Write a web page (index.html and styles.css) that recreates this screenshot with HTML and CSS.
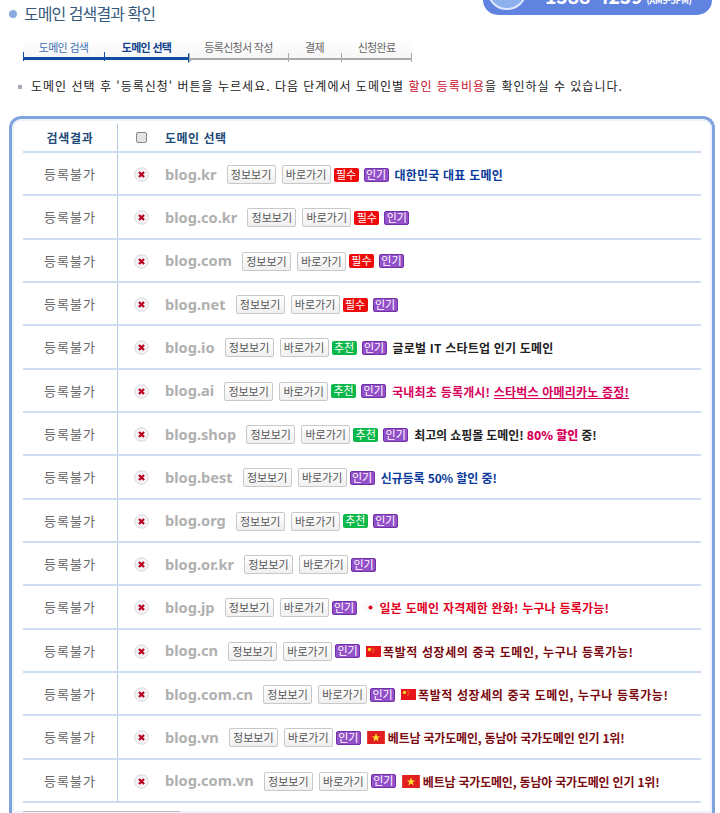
FILE: index.html
```html
<!DOCTYPE html>
<html lang="ko">
<head>
    <meta charset="UTF-8">
    <meta name="viewport" content="width=device-width, initial-scale=1.0">
    <title>도메인 검색결과 확인</title>
    <link rel="stylesheet" href="styles.css">
</head>
<body>

    <svg class="defs" width="0" height="0">
        <symbol id="no" viewBox="0 0 16 16">
            <circle cx="8" cy="8" r="7.2" fill="#f4f4f6" stroke="#d5d5da"/>
            <path d="M5.3 5.3 10.7 10.7M10.7 5.3 5.3 10.7" stroke="#b80020" stroke-width="2.4"/>
        </symbol>
        <symbol id="jp" viewBox="0 0 15 11">
            <rect width="15" height="11" fill="#fafafa"/>
            <circle cx="7.5" cy="5.5" r="2" fill="#e00020"/>
        </symbol>
        <symbol id="cn" viewBox="0 0 15 11">
            <rect width="15" height="11" fill="#e8141c"/>
            <circle cx="3.5" cy="3.5" r="1.8" fill="#f5d020"/>
            <circle cx="7" cy="2" r=".6" fill="#f5d020"/>
            <circle cx="8" cy="4" r=".6" fill="#f5d020"/>
            <circle cx="7" cy="6" r=".6" fill="#f5d020"/>
        </symbol>
        <symbol id="vn" viewBox="0 0 15 11">
            <rect width="15" height="11" fill="#e02020"/>
            <path d="M7.5 2 8.5 4.6H11L9 6.2 9.7 8.8 7.5 7.2 5.3 8.8 6 6.2 4 4.6H6.5Z" fill="#ffe030"/>
        </symbol>
    </svg>

    <header class="top">
        <h1 class="title">도메인 검색결과 확인</h1>
        <div class="phone">
            <span class="phone-icon"></span>
            <strong>1588-4259</strong>
            <span class="phone-note">(AM9-5PM)</span>
        </div>
    </header>

    <ol class="steps">
        <li class="step done">도메인 검색</li>
        <li class="step current">도메인 선택</li>
        <li class="step">등록신청서 작성</li>
        <li class="step short">결제</li>
        <li class="step last">신청완료</li>
    </ol>

    <p class="notice">도메인 선택 후 '등록신청' 버튼을 누르세요. 다음 단계에서 도메인별 <em>할인 등록비용</em>을 확인하실 수 있습니다.</p>

    <section class="panel">
        <div class="row head">
            <div class="col-result">검색결과</div>
            <div class="col-domain">
                <input type="checkbox" class="check">
                <span>도메인 선택</span>
            </div>
        </div>

        <div class="row">
            <div class="col-result">등록불가</div>
            <div class="col-domain">
                <svg class="no"><use href="#no"/></svg>
                <span class="name">blog.kr</span>
                <button class="btn">정보보기</button><button class="btn">바로가기</button>
                <span class="tag must">필수</span><span class="tag hot">인기</span>
                <span class="msg wide navy">대한민국 대표 도메인</span>
            </div>
        </div>
        <div class="row">
            <div class="col-result">등록불가</div>
            <div class="col-domain">
                <svg class="no"><use href="#no"/></svg>
                <span class="name">blog.co.kr</span>
                <button class="btn">정보보기</button><button class="btn">바로가기</button>
                <span class="tag must">필수</span><span class="tag hot">인기</span>
            </div>
        </div>
        <div class="row">
            <div class="col-result">등록불가</div>
            <div class="col-domain">
                <svg class="no"><use href="#no"/></svg>
                <span class="name">blog.com</span>
                <button class="btn">정보보기</button><button class="btn">바로가기</button>
                <span class="tag must">필수</span><span class="tag hot">인기</span>
            </div>
        </div>
        <div class="row">
            <div class="col-result">등록불가</div>
            <div class="col-domain">
                <svg class="no"><use href="#no"/></svg>
                <span class="name">blog.net</span>
                <button class="btn">정보보기</button><button class="btn">바로가기</button>
                <span class="tag must">필수</span><span class="tag hot">인기</span>
            </div>
        </div>
        <div class="row">
            <div class="col-result">등록불가</div>
            <div class="col-domain">
                <svg class="no"><use href="#no"/></svg>
                <span class="name">blog.io</span>
                <button class="btn">정보보기</button><button class="btn">바로가기</button>
                <span class="tag good">추천</span><span class="tag hot">인기</span>
                <span class="msg wide">글로벌 IT 스타트업 인기 도메인</span>
            </div>
        </div>
        <div class="row">
            <div class="col-result">등록불가</div>
            <div class="col-domain">
                <svg class="no"><use href="#no"/></svg>
                <span class="name">blog.ai</span>
                <button class="btn">정보보기</button><button class="btn">바로가기</button>
                <span class="tag good">추천</span><span class="tag hot">인기</span>
                <span class="msg wide pink">국내최초 등록개시! <u>스타벅스 아메리카노 증정!</u></span>
            </div>
        </div>
        <div class="row">
            <div class="col-result">등록불가</div>
            <div class="col-domain">
                <svg class="no"><use href="#no"/></svg>
                <span class="name">blog.shop</span>
                <button class="btn">정보보기</button><button class="btn">바로가기</button>
                <span class="tag good">추천</span><span class="tag hot">인기</span>
                <span class="msg">최고의 쇼핑몰 도메인! <b class="pink">80% 할인</b> 중!</span>
            </div>
        </div>
        <div class="row">
            <div class="col-result">등록불가</div>
            <div class="col-domain">
                <svg class="no"><use href="#no"/></svg>
                <span class="name">blog.best</span>
                <button class="btn">정보보기</button><button class="btn">바로가기</button>
                <span class="tag hot">인기</span>
                <span class="msg navy">신규등록 50% 할인 중!</span>
            </div>
        </div>
        <div class="row">
            <div class="col-result">등록불가</div>
            <div class="col-domain">
                <svg class="no"><use href="#no"/></svg>
                <span class="name">blog.org</span>
                <button class="btn">정보보기</button><button class="btn">바로가기</button>
                <span class="tag good">추천</span><span class="tag hot">인기</span>
            </div>
        </div>
        <div class="row">
            <div class="col-result">등록불가</div>
            <div class="col-domain">
                <svg class="no"><use href="#no"/></svg>
                <span class="name">blog.or.kr</span>
                <button class="btn">정보보기</button><button class="btn">바로가기</button>
                <span class="tag hot">인기</span>
            </div>
        </div>
        <div class="row">
            <div class="col-result">등록불가</div>
            <div class="col-domain">
                <svg class="no"><use href="#no"/></svg>
                <span class="name">blog.jp</span>
                <button class="btn">정보보기</button><button class="btn">바로가기</button>
                <span class="tag hot">인기</span>
                <svg class="flag"><use href="#jp"/></svg>
                <span class="msg wide red">일본 도메인 자격제한 완화! 누구나 등록가능!</span>
            </div>
        </div>
        <div class="row">
            <div class="col-result">등록불가</div>
            <div class="col-domain">
                <svg class="no"><use href="#no"/></svg>
                <span class="name">blog.cn</span>
                <button class="btn">정보보기</button><button class="btn">바로가기</button>
                <span class="tag hot">인기</span>
                <svg class="flag"><use href="#cn"/></svg>
                <span class="msg wider maroon">폭발적 성장세의 중국 도메인, 누구나 등록가능!</span>
            </div>
        </div>
        <div class="row">
            <div class="col-result">등록불가</div>
            <div class="col-domain">
                <svg class="no"><use href="#no"/></svg>
                <span class="name">blog.com.cn</span>
                <button class="btn">정보보기</button><button class="btn">바로가기</button>
                <span class="tag hot">인기</span>
                <svg class="flag"><use href="#cn"/></svg>
                <span class="msg wider maroon">폭발적 성장세의 중국 도메인, 누구나 등록가능!</span>
            </div>
        </div>
        <div class="row">
            <div class="col-result">등록불가</div>
            <div class="col-domain">
                <svg class="no"><use href="#no"/></svg>
                <span class="name">blog.vn</span>
                <button class="btn">정보보기</button><button class="btn">바로가기</button>
                <span class="tag hot">인기</span>
                <svg class="flag big"><use href="#vn"/></svg>
                <span class="msg tight maroon">베트남 국가도메인, 동남아 국가도메인 인기 1위!</span>
            </div>
        </div>
        <div class="row">
            <div class="col-result">등록불가</div>
            <div class="col-domain">
                <svg class="no"><use href="#no"/></svg>
                <span class="name">blog.com.vn</span>
                <button class="btn">정보보기</button><button class="btn">바로가기</button>
                <span class="tag hot">인기</span>
                <svg class="flag big"><use href="#vn"/></svg>
                <span class="msg tight maroon">베트남 국가도메인, 동남아 국가도메인 인기 1위!</span>
            </div>
        </div>

        <div class="more"></div>
    </section>

</body>
</html>
```

FILE: styles.css
```css
html, body {
    height: 813px;
    overflow: hidden;
}
body {
    margin: 0;
    background-color: #fff;
    font-family: "Noto Sans CJK KR", "Liberation Sans", sans-serif;
    font-size: 12px;
    color: #222;
}
.defs {
    display: block;
    height: 0;
}

/* top */
.top {
    display: flex;
    justify-content: space-between;
    align-items: flex-start;
    padding: 0 8px 0 9px;
    height: 38px;
}
.title {
    margin: 1px 0 0;
    font-size: 16px;
    font-weight: 400;
    line-height: 24px;
    letter-spacing: -.95px;
    color: #35597c;
}
.title::before {
    content: "";
    display: inline-block;
    width: 8px;
    height: 8px;
    margin-right: 7px;
    border-radius: 50%;
    background-color: #8aa9dc;
    vertical-align: 2px;
}
.phone {
    display: flex;
    align-items: flex-end;
    gap: 4px;
    box-sizing: border-box;
    width: 229px;
    height: 15px;
    padding: 0 0 10px 4px;
    border-radius: 0 0 22px 22px;
    background-color: #5f83df;
    color: #fff;
    line-height: 1;
}
.phone-icon {
    flex: none;
    width: 40px;
    height: 40px;
    margin-bottom: -5px;
    margin-right: 14px;
    border: 2px solid #dfe8fb;
    box-sizing: border-box;
    border-radius: 50%;
    background-color: #8fb0ee;
}
.phone strong {
    font-size: 19.5px;
    letter-spacing: -.2px;
}
.phone-note {
    font-size: 9px;
    font-weight: 700;
    letter-spacing: -.3px;
}

/* steps */
.steps {
    display: flex;
    margin: 0 0 0 23px;
    padding: 0;
    list-style: none;
}
.step {
    position: relative;
    box-sizing: border-box;
    width: 99px;
    height: 22px;
    padding-top: 1px;
    border-bottom: 2px solid #aaa;
    background: linear-gradient(#fff, #f6f6f6);
    font-size: 11px;
    line-height: 16px;
    letter-spacing: -.7px;
    text-align: center;
    color: #666;
}
.step::before {
    content: "";
    position: absolute;
    left: 0;
    bottom: -4px;
    width: 1px;
    height: 9px;
    background-color: #aaa;
}
.step.short {
    width: 53px;
}
.step.last {
    width: 71px;
}
.step.last::after {
    content: "";
    position: absolute;
    right: 0;
    bottom: -4px;
    width: 1px;
    height: 9px;
    background-color: #aaa;
}
.step.done {
    width: 81px;
    border-bottom: 3px solid #0f4aa5;
    color: #3f72b5;
}
.step.current {
    width: 85px;
    border-bottom: 3px solid #0f4aa5;
    font-weight: 700;
    color: #0f3f8c;
}
.step.done::before, .step.current::before {
    background-color: #0f4aa5;
}
.step.current::after {
    content: "";
    position: absolute;
    right: -4px;
    bottom: -6px;
    border-left: 5px solid #0f4aa5;
    border-top: 5px solid transparent;
    border-bottom: 5px solid transparent;
}

.notice {
    margin: 17px 0 0 31px;
    line-height: 18px;
    letter-spacing: 1px;
    white-space: nowrap;
    position: relative;
}
.notice::before {
    content: "";
    position: absolute;
    left: -13px;
    top: 8px;
    width: 4px;
    height: 4px;
    background-color: #aab;
}
.notice em {
    font-style: normal;
    color: #c8102e;
}

/* panel */
.panel {
    box-sizing: border-box;
    margin: 21px 5px 0 9px;
    padding: 5px 11px 0;
    height: 697px;
    overflow: hidden;
    border: 3px solid #7fa4dd;
    border-bottom: 0;
    border-radius: 12px 12px 0 0;
    box-shadow: inset 0 0 0 2px #eef3fb;
}
.row {
    display: flex;
    box-sizing: border-box;
    height: 43.33px;
    border-bottom: 2px solid #cddcf0;
}
.row.head {
    height: 29px;
    color: #1e4a78;
    font-weight: 700;
    font-size: 12px;
    letter-spacing: .5px;
}
.col-result {
    flex: none;
    display: flex;
    align-items: center;
    justify-content: center;
    width: 94px;
    border-right: 1px solid #b4cbe8;
    font-size: 13px;
    letter-spacing: 1px;
    color: #666;
}
.head .col-result {
    font-size: 12px;
    letter-spacing: .7px;
    color: #1e4a78;
}
.col-domain {
    display: flex;
    align-items: center;
    padding-left: 16px;
    white-space: nowrap;
}
.check {
    appearance: none;
    box-sizing: border-box;
    width: 11px;
    height: 11px;
    margin: 0 18px 0 2px;
    border: 1px solid #888;
    border-radius: 2px;
    background-color: #e4e4e4;
}
.no {
    flex: none;
    width: 15px;
    height: 15px;
    margin: 2px 16px 0 0;
}
.name {
    margin-right: 10px;
    font-family: "Noto Sans", "Liberation Sans", sans-serif;
    font-size: 14.6px;
    font-weight: 700;
    color: #b0b0b0;
}
.btn {
    box-sizing: border-box;
    width: 49px;
    height: 19px;
    margin: 2px 6px 0 0;
    padding: 0;
    border: 1px solid #c8c8c8;
    border-radius: 2px;
    background: linear-gradient(#fff, #f0f0f0);
    font-family: inherit;
    font-size: 11px;
    line-height: 15px;
    color: #555;
}
.tag {
    box-sizing: border-box;
    width: 25px;
    height: 14px;
    margin: 2px 5px 0 0;
    border-radius: 2px;
    font-size: 11px;
    line-height: 13px;
    text-align: center;
    color: #fff;
}
.btn + .tag {
    margin-left: -3px;
}
.must {
    background-color: #ee0a0a;
}
.good {
    background-color: #0cb84a;
}
.hot {
    border: 1px solid #6f32a8;
    line-height: 11px;
    background-color: #9450c8;
}
.msg {
    margin-top: 2px;
    font-weight: 700;
    letter-spacing: -.1px;
}
.tag + .msg {
    margin-left: 1px;
}
.msg.wide {
    letter-spacing: .2px;
}
.msg.wider {
    letter-spacing: .6px;
}
.msg.tight {
    letter-spacing: -.2px;
}
.flag {
    flex: none;
    width: 15px;
    height: 11px;
    margin: 2px 2px 0 1px;
}
.flag.big {
    width: 18px;
    height: 13px;
    margin-right: 3px;
}
.navy {
    color: #0a3a9a;
}
.pink {
    color: #d6005a;
}
.red {
    color: #e0001e;
}
.maroon {
    color: #7a0a10;
}
.more {
    width: 157px;
    height: 2px;
    margin-top: 8px;
    border-top: 1px solid #bbb;
}
```
